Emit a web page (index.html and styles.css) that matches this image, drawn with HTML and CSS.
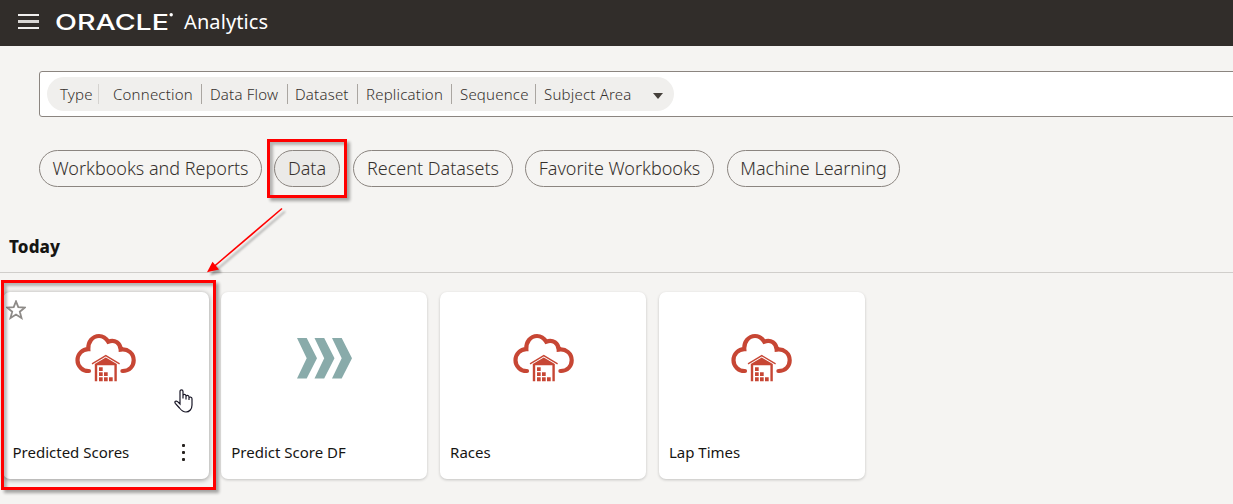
FILE: index.html
```
<!DOCTYPE html>
<html lang="en">
<head>
<meta charset="utf-8">
<title>Oracle Analytics</title>
<link rel="stylesheet" href="styles.css">
</head>
<body>
<svg class="defs" width="0" height="0" aria-hidden="true">
  <symbol id="cloud-dataset" viewBox="0 0 61 49" overflow="visible">
    <g fill="none" stroke="#c74634" stroke-width="4.2">
      <path d="M14 38C7.500 38.300 2.500 33 2.500 27.200C2.500 21 7.300 16.200 13.300 16.200C12.8 9 17.5 3 24 3C28 3 31 5 33.2 8.7C40 6 45.5 10.5 45.7 16.6C53 15.5 58.700 20.5 58.700 27.3C58.700 33.2 54.5 38 47.5 38" stroke-linejoin="miter"/>
      <path d="M13.9 38H14M47.4 38H47.5" stroke-linecap="round"/>
      <path d="M17 30.9L30.8 22.6L44.6 30.9" stroke-width="1.3"/>
    </g>
    <path fill="#c74634" d="M30.8 24.6L41.8 31V48.2H39.4V32.3H22.2V48.2H19.8V31ZM24 34.2h3.7v3.7H24ZM24 39.2h3.7v3.7H24ZM29 39.2h3.7v3.7H29ZM24 44.2h3.7v4H24ZM29 44.2h3.7v4H29ZM34 44.2h3.7v4H34Z"/>
  </symbol>
</svg>
<header class="topbar">
  <span class="menu"><i></i><i></i><i></i></span>
  <svg class="logo" width="120" height="24" viewBox="0 0 120 24" role="img" aria-label="ORACLE"><text x="-1" y="19.5" textLength="114" lengthAdjust="spacingAndGlyphs">ORACLE</text><circle cx="115.2" cy="4.800" r="1.700"/></svg>
  <span class="product">Analytics</span>
</header>
<main>
  <div class="search">
    <div class="filter">
      <span class="kind">Type</span>
      <span class="f1">Connection</span><span class="f2">Data Flow</span><span class="f3">Dataset</span><span class="f4">Replication</span><span class="f5">Sequence</span><span class="f6">Subject Area</span>
      <b class="caret"></b>
    </div>
  </div>
  <nav class="chips">
    <span class="chip c1">Workbooks and Reports</span>
    <span class="chip c2 active">Data</span>
    <span class="chip c3">Recent Datasets</span>
    <span class="chip c4">Favorite Workbooks</span>
    <span class="chip c5">Machine Learning</span>
  </nav>
  <h2 class="heading">Today</h2>
  <section class="cards">
    <article class="card hover">
      <svg class="star" width="20" height="20" viewBox="0 0 20 20"><path d="M10 1.4L12.3 7.2L18.8 7.6L13.8 11.7L15.5 18L10 14.5L4.5 18L6.2 11.7L1.2 7.6L7.7 7.2Z"/></svg>
      <svg class="icon" width="61" height="49"><use href="#cloud-dataset" width="61" height="49"/></svg>
      <div class="label"><span class="n1">Predicted Scores</span><span class="dots"><i></i><i></i><i></i></span></div>
    </article>
    <article class="card">
      <svg class="icon flow" width="56" height="41" viewBox="0 0 56 41"><path d="M0 0H9.7L20 20.2L9.7 40.4H0L9.7 20.2ZM17.5 0H27.2L37.5 20.2L27.2 40.4H17.5L27.2 20.2ZM35 0H44.7L55 20.2L44.7 40.4H35L44.7 20.2Z"/></svg>
      <div class="label"><span class="n2">Predict Score DF</span></div>
    </article>
    <article class="card">
      <svg class="icon" width="61" height="49"><use href="#cloud-dataset" width="61" height="49"/></svg>
      <div class="label"><span class="n3">Races</span></div>
    </article>
    <article class="card">
      <svg class="icon" width="61" height="49"><use href="#cloud-dataset" width="61" height="49"/></svg>
      <div class="label"><span class="n4">Lap Times</span></div>
    </article>
  </section>
</main>
<div class="mark mark-chip"></div>
<div class="mark mark-card"></div>
<svg class="arrow" width="90" height="76" viewBox="200 204 90 76"><path class="shaft" d="M282 208.500L214 266.500"/><path class="head" d="M207 272.300L212.500 261.800L219 269.600Z"/></svg>
<svg class="pointer" width="20" height="26" viewBox="0 0 20 26"><path d="M6 16V3.500C6 1.200 9 1.200 9 3.500V10.500V7.500C9 6 12 6 12 8V11.500V8.500C12 7 15 7 15 9V12V10C15 8.500 18 8.700 18 10.700V17C18 21 15.500 24 12 24C8.500 24 7 22 5.500 20L1.300 15.300C.2 13.500 2 12.300 3.600 13.600Z"/></svg>
</body>
</html>
```
FILE: styles.css
```
* { box-sizing: border-box; }
body { margin: 0; height: 504px; overflow: hidden; position: relative; background: #f5f4f2; font-family: "Noto Sans", "Open Sans", sans-serif; color: #161513; }
.defs { position: absolute; }
.topbar { height: 46px; background: #312d2a; display: flex; align-items: center; padding: 0 18px 3px; color: #fff; }
.menu { width: 21px; display: grid; gap: 4px; margin-right: 17px; }
.menu i { height: 2px; background: #f0efee; }
.menu i:nth-child(2) { height: 3px; background: #d8d6d4; }
.logo { fill: #fff; }
.logo text { font: 500 22px Inter, sans-serif; }
.product { font-size: 20px; margin-left: 8px; letter-spacing: .1px; }
.search { margin: 25px -10px 0 39px; height: 46px; border: 1px solid #8b8580; border-radius: 3px; background: #fff; padding: 5px 7px; }
.filter { width: 627px; height: 34px; border-radius: 17px; background: #f0efed; display: flex; align-items: center; padding-left: 13px; font: 300 15px/20px "Noto Sans", sans-serif; letter-spacing: .2px; color: #36312d; white-space: nowrap; }
.filter span { border-right: 1px solid #aaa6a1; flex: none; }
.filter .kind { width: 39px; margin-right: 14px; border-color: #d5d3d0; }
.f1 { width: 89px; margin-right: 8px; }
.f2 { width: 78px; margin-right: 7px; }
.f3 { width: 63px; margin-right: 8px; }
.f4 { width: 86px; margin-right: 8px; }
.f5 { width: 76px; margin-right: 8px; }
.filter .f6 { width: 109px; border: 0; }
.caret { border: 5px solid transparent; border-top: 6px solid #45403b; border-bottom: 0; margin-top: 3px; }
.chips { margin: 33px 0 0 39px; display: flex; }
.chip { height: 37px; border: 1px solid #8b8580; border-radius: 18.500px; display: flex; align-items: center; justify-content: center; padding-bottom: 2px; font-size: 18px; font-weight: 300; color: #36312d; white-space: nowrap; }
.active { background: #ebeae8; }
.c1 { width: 223px; margin-right: 12px; }
.c2 { width: 66px; margin-right: 13px; }
.c3 { width: 160px; margin-right: 12px; }
.c4 { width: 189px; margin-right: 13px; }
.c5 { width: 173px; }
.heading { margin: 47px 0 0; height: 39px; padding-left: 9px; border-bottom: 1px solid #d0cecb; font-size: 17px; line-height: 25px; font-weight: 800; letter-spacing: .1px; }
.cards { display: grid; grid-template-columns: repeat(4, 206px); gap: 12.800px; margin: 19px 0 0 2.500px; }
.card { position: relative; height: 187px; border-radius: 7px; background: #fff; box-shadow: 0 1px 3px #0003; display: flex; flex-direction: column; align-items: center; padding-top: 41px; }
.hover { box-shadow: 0 1px 5px #0006; }
.icon { height: 49px; flex: none; overflow: visible; }
.flow { height: 41px; margin: 5px 0 3px 1px; fill: #89abaa; }
.star { position: absolute; left: 3px; top: 8px; fill: none; stroke: #8e8b88; stroke-width: 1.800; }
.label { width: 100%; margin-top: 58px; padding: 0 24px 0 10px; display: flex; justify-content: space-between; align-items: center; font-size: 15px; line-height: 24px; white-space: nowrap; }
.dots { display: grid; gap: 4px; }
.dots i { width: 3px; height: 3px; border-radius: 1px; background: #25211e; }
.mark { position: absolute; border: 3px solid #f00; box-shadow: 3px 3px 3px #0005, inset 3px 3px 3px #0004; }
.mark-chip { left: 267px; top: 139px; width: 80px; height: 59px; }
.mark-card { left: 1px; top: 280px; width: 215px; height: 210px; }
.arrow { position: absolute; left: 200px; top: 204px; filter: drop-shadow(3px 3px 1px #0005); }
.shaft { stroke: #f00; stroke-width: 1.600; }
.head { fill: #f00; }
.pointer { position: absolute; left: 174px; top: 388px; fill: #fff; stroke: #171525; stroke-width: 1.200; }
```
